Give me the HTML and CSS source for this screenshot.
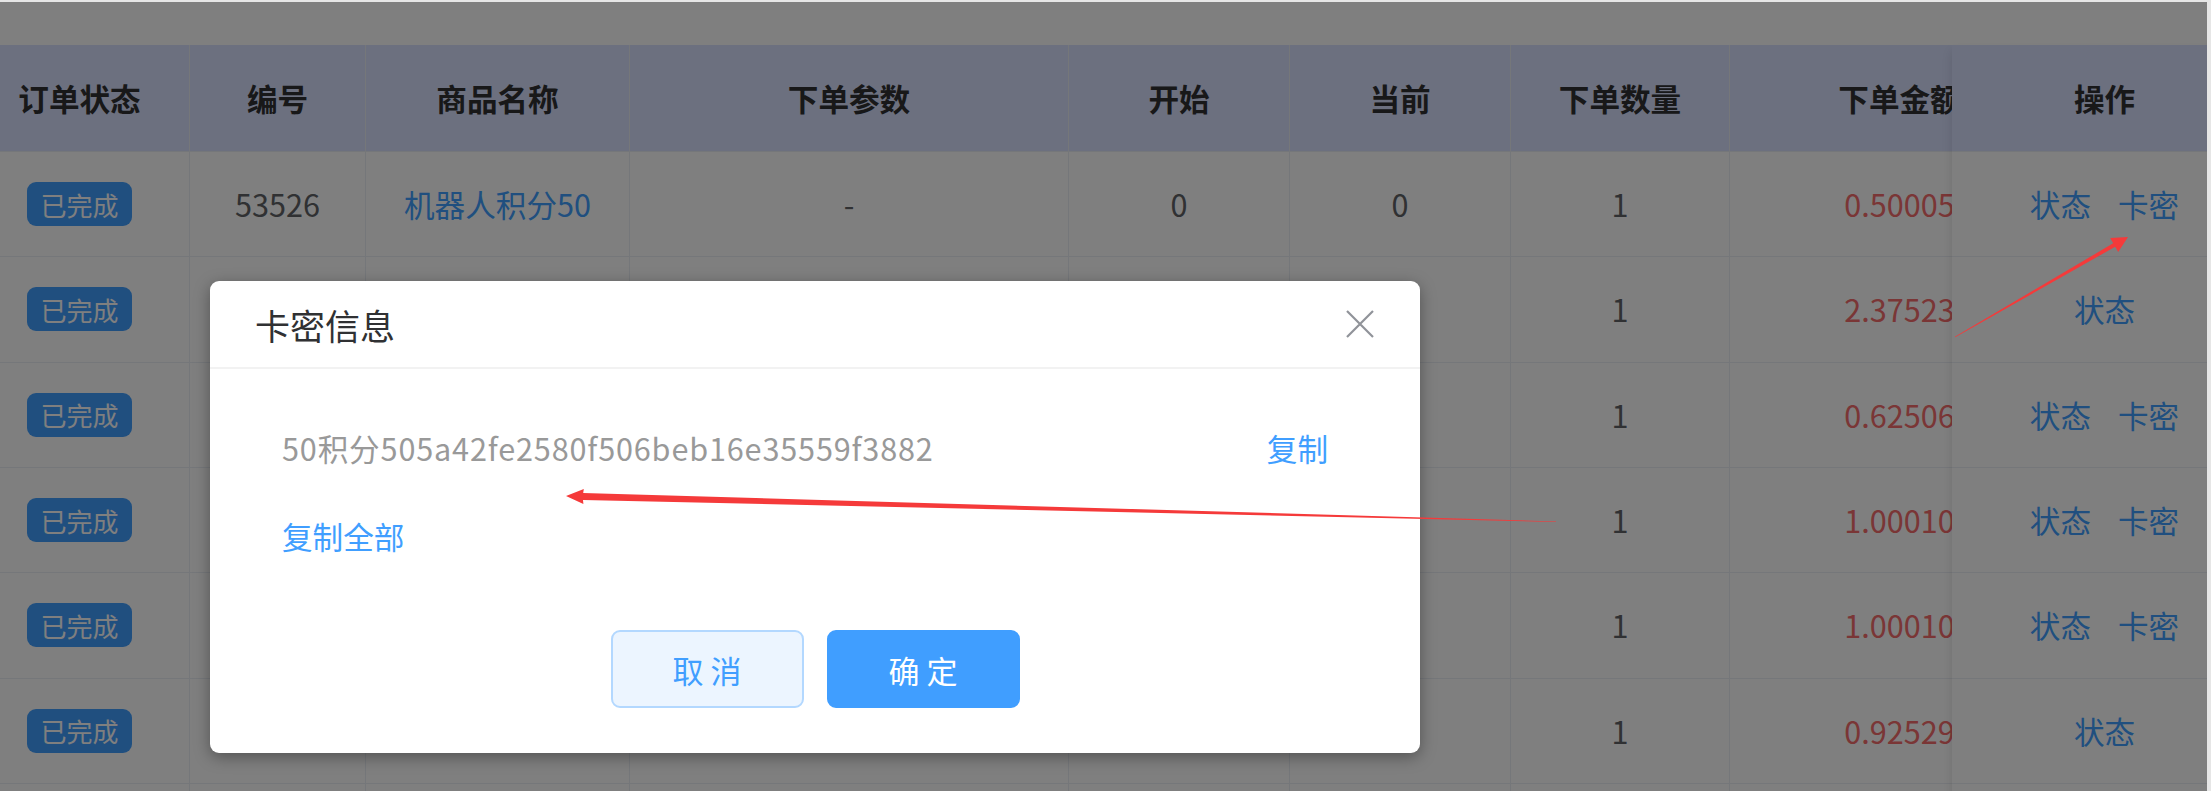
FILE: index.html
```html
<!DOCTYPE html>
<html lang="zh-CN">
<head>
  <meta charset="UTF-8" />
  <title>订单列表</title>
  <link rel="stylesheet" href="styles.css">
</head>
<body>
  <div class="window">
    <div class="toolbar"></div>

    <div class="table">
      <div class="table-main">
        <div class="row head">
          <div class="cell first">订单状态</div>
          <div class="cell">编号</div>
          <div class="cell">商品名称</div>
          <div class="cell">下单参数</div>
          <div class="cell">开始</div>
          <div class="cell">当前</div>
          <div class="cell">下单数量</div>
          <div class="cell">下单金额</div>
          <div class="cell">下单时间</div>
        </div>
        <div class="row">
          <div class="cell first"><span class="tag">已完成</span></div>
          <div class="cell">53526</div>
          <div class="cell"><span class="link">机器人积分50</span></div>
          <div class="cell">-</div>
          <div class="cell">0</div>
          <div class="cell">0</div>
          <div class="cell">1</div>
          <div class="cell money">0.50005</div>
          <div class="cell"></div>
        </div>
        <div class="row">
          <div class="cell first"><span class="tag">已完成</span></div>
          <div class="cell">53519</div>
          <div class="cell"><span class="link">机器人积分200</span></div>
          <div class="cell">-</div>
          <div class="cell">0</div>
          <div class="cell">0</div>
          <div class="cell">1</div>
          <div class="cell money">2.37523</div>
          <div class="cell"></div>
        </div>
        <div class="row">
          <div class="cell first"><span class="tag">已完成</span></div>
          <div class="cell">53488</div>
          <div class="cell"><span class="link">机器人积分60</span></div>
          <div class="cell">-</div>
          <div class="cell">0</div>
          <div class="cell">0</div>
          <div class="cell">1</div>
          <div class="cell money">0.62506</div>
          <div class="cell"></div>
        </div>
        <div class="row">
          <div class="cell first"><span class="tag">已完成</span></div>
          <div class="cell">53470</div>
          <div class="cell"><span class="link">机器人积分100</span></div>
          <div class="cell">-</div>
          <div class="cell">0</div>
          <div class="cell">0</div>
          <div class="cell">1</div>
          <div class="cell money">1.00010</div>
          <div class="cell"></div>
        </div>
        <div class="row">
          <div class="cell first"><span class="tag">已完成</span></div>
          <div class="cell">53462</div>
          <div class="cell"><span class="link">机器人积分100</span></div>
          <div class="cell">-</div>
          <div class="cell">0</div>
          <div class="cell">0</div>
          <div class="cell">1</div>
          <div class="cell money">1.00010</div>
          <div class="cell"></div>
        </div>
        <div class="row">
          <div class="cell first"><span class="tag">已完成</span></div>
          <div class="cell">53455</div>
          <div class="cell"><span class="link">机器人积分90</span></div>
          <div class="cell">-</div>
          <div class="cell">0</div>
          <div class="cell">0</div>
          <div class="cell">1</div>
          <div class="cell money">0.92529</div>
          <div class="cell"></div>
        </div>
        <div class="row">
          <div class="cell first"></div>
          <div class="cell"></div>
          <div class="cell"></div>
          <div class="cell"></div>
          <div class="cell"></div>
          <div class="cell"></div>
          <div class="cell"></div>
          <div class="cell"></div>
          <div class="cell"></div>
        </div>
      </div>

      <div class="table-fixed">
        <div class="row head"><div class="cell">操作</div></div>
        <div class="row"><div class="cell ops"><span class="link">状态</span><span class="link">卡密</span></div></div>
        <div class="row"><div class="cell ops"><span class="link">状态</span></div></div>
        <div class="row"><div class="cell ops"><span class="link">状态</span><span class="link">卡密</span></div></div>
        <div class="row"><div class="cell ops"><span class="link">状态</span><span class="link">卡密</span></div></div>
        <div class="row"><div class="cell ops"><span class="link">状态</span><span class="link">卡密</span></div></div>
        <div class="row"><div class="cell ops"><span class="link">状态</span></div></div>
        <div class="row"><div class="cell ops"></div></div>
      </div>
    </div>

    <div class="mask"></div>

    <div class="dialog">
      <div class="dialog-header">
        <span class="dialog-title">卡密信息</span>
        <svg class="dialog-close" width="30" height="30" viewBox="0 0 30 30">
          <path d="M2 2 L28 28 M28 2 L2 28" stroke="#909399" stroke-width="2.2" fill="none"/>
        </svg>
      </div>
      <div class="dialog-body">
        <div class="card-line">
          <span class="card-code">50积分505a42fe2580f506beb16e35559f3882</span>
          <span class="text-btn">复制</span>
        </div>
        <div class="card-line">
          <span class="text-btn">复制全部</span>
        </div>
      </div>
      <div class="dialog-footer">
        <button class="btn btn-plain">取 消</button>
        <button class="btn btn-primary">确 定</button>
      </div>
    </div>
  </div>

  <!-- annotation arrows drawn on the screenshot -->
  <svg class="arrows" width="2211" height="791" viewBox="0 0 2211 791">
    <polygon fill="#f53a3a" points="1955.2,337.3 2115.2,246.7 2118.2,252 2128,237 2110.2,238 2113.2,243.3 1954.8,336.7"/>
    <polygon fill="#f53a3a" points="1556,522 583,500 583.4,504 566,496 583.8,489 583.2,493 1556,521.4"/>
  </svg>
</body>
</html>
```

FILE: styles.css
```css
html, body {
  margin: 0;
}
body {
  position: relative;
  width: 2211px;
  height: 791px;
  overflow: hidden;
  background: #e6e6e6;
  font-family: "Noto Sans CJK SC", "Microsoft YaHei", sans-serif;
}
.window {
  position: relative;
  margin-top: 2px;
  width: 2207px;
  height: 789px;
  overflow: hidden;
  background: #fff;
}
.toolbar {
  height: 43px;
}
.table {
  display: flex;
  width: 2258px;
}
.table-main {
  flex: none;
  width: 1952px;
  overflow: hidden;
}
.table-fixed {
  flex: none;
  position: relative;
  z-index: 1;
  width: 306px;
  background: #fff;
  box-shadow: -6px 0 10px -6px rgba(0,0,0,0.12);
}
.row {
  display: grid;
  grid-template-columns: 190px 176px 264px 439px 221px 221px 219px 340px 200px;
  height: 105.33px;
}
.table-fixed .row {
  grid-template-columns: 306px;
}
.row.head {
  height: 107px;
}
.cell {
  box-sizing: border-box;
  display: flex;
  align-items: center;
  justify-content: center;
  border-right: 1px solid #ebeef5;
  border-bottom: 1px solid #ebeef5;
  font-size: 30.6px;
  color: #606266;
  white-space: nowrap;
}
.cell.first {
  padding-right: 30px;
}
.head .cell {
  background: #d8e0fe;
  color: #303133;
  font-weight: bold;
}
.tag {
  display: inline-flex;
  align-items: center;
  height: 44px;
  padding: 0 13px;
  border-radius: 9px;
  background: #409eff;
  color: #fff;
  font-size: 26px;
}
.link {
  color: #409eff;
}
.money {
  color: #f56c6c;
}
.ops {
  gap: 27px;
}

/* modal */
.mask {
  position: absolute;
  top: 0;
  left: 0;
  right: 0;
  bottom: 0;
  z-index: 5;
  background: rgba(0,0,0,0.5);
}
.dialog {
  position: absolute;
  left: 210px;
  top: 279px;
  z-index: 6;
  width: 1210px;
  background: #fff;
  border-radius: 9px;
  box-shadow: 0 4px 16px rgba(0,0,0,0.35);
}
.dialog-header {
  display: flex;
  align-items: center;
  justify-content: space-between;
  height: 86px;
  padding: 0 45px;
  border-bottom: 2px solid #f2f2f2;
}
.dialog-title {
  font-size: 35px;
  color: #303133;
}
.dialog-body {
  padding: 56px 92px 0 72px;
}
.card-line {
  display: flex;
  align-items: center;
  justify-content: space-between;
  height: 46px;
  margin-bottom: 42px;
  font-size: 30.6px;
}
.card-code {
  color: #999;
  letter-spacing: 0.85px;
}
.text-btn {
  color: #409eff;
}
.dialog-footer {
  display: flex;
  justify-content: center;
  gap: 23px;
  padding: 29px 0 45px;
}
.btn {
  box-sizing: border-box;
  width: 193px;
  height: 78px;
  border-radius: 9px;
  font-family: inherit;
  font-size: 31px;
  cursor: pointer;
}
.btn-plain {
  background: #ecf5ff;
  border: 2px solid #b3d8ff;
  color: #409eff;
}
.btn-primary {
  background: #409eff;
  border: 2px solid #409eff;
  color: #fff;
}
.arrows {
  position: absolute;
  top: 0;
  left: 0;
  z-index: 10;
}
```
